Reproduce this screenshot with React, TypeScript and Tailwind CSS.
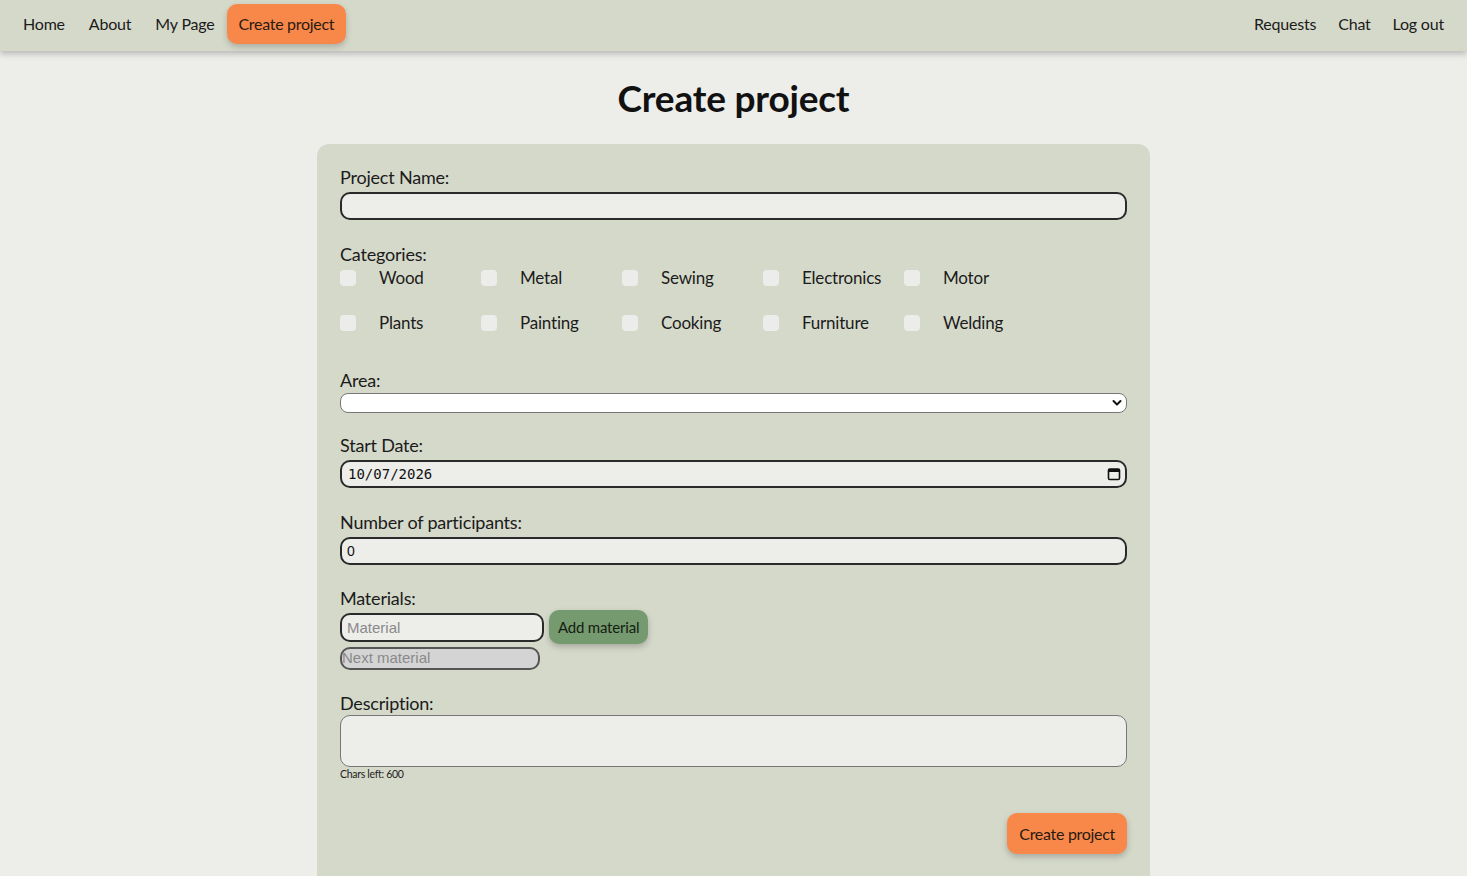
import React from "react";

const NAV_LEFT = ["Home", "About", "My Page"];
const NAV_RIGHT = ["Requests", "Chat", "Log out"];
const CATEGORIES = [
  "Wood",
  "Metal",
  "Sewing",
  "Electronics",
  "Motor",
  "Plants",
  "Painting",
  "Cooking",
  "Furniture",
  "Welding",
];

const font = { fontFamily: "Lato, 'Open Sans', sans-serif" };

function Label({ children, className = "" }: { children: React.ReactNode; className?: string }) {
  return (
    <div className={`text-[18px] leading-[24px] text-[#1b1b1b] tracking-[-0.2px] ${className}`}>{children}</div>
  );
}

function CalendarIcon() {
  return (
    <svg width="14" height="14" viewBox="0 0 14 14" className="shrink-0">
      <rect x="1.5" y="2" width="11" height="10.5" rx="1.3" fill="none" stroke="#111" strokeWidth="1.6" />
      <rect x="1.5" y="2" width="11" height="3" fill="#111" />
    </svg>
  );
}

function Chevron() {
  return (
    <svg width="10" height="8" viewBox="0 0 10 8" className="shrink-0">
      <path d="M1.5 2 L5 5.5 L8.5 2" fill="none" stroke="#111" strokeWidth="2" strokeLinecap="round" strokeLinejoin="round" />
    </svg>
  );
}

export default function App() {
  return (
    <div className="min-h-[876px] bg-[#ededea] text-[#1b1b1b]" style={font}>
      {/* top navigation */}
      <nav className="relative z-10 flex h-[51px] items-center justify-between bg-[#d5d9ca] pb-[3px] pl-[11px] pr-[12px] shadow-[0_3px_6px_rgba(0,0,0,0.22)]">
        <div className="flex items-center">
          {NAV_LEFT.map((item) => (
            <a key={item} className="px-[12px] text-[16px] tracking-[-0.2px] text-[#1b1b1b]">
              {item}
            </a>
          ))}
          <a className="flex h-[40px] items-center rounded-[10px] bg-[#f8884a] px-[12px] text-[16px] tracking-[-0.3px] text-[#2a1a10] shadow-[0_3px_6px_rgba(0,0,0,0.2)]">
            Create project
          </a>
        </div>
        <div className="flex items-center">
          {NAV_RIGHT.map((item) => (
            <a key={item} className="px-[11px] text-[16px] tracking-[-0.2px] text-[#1b1b1b]">
              {item}
            </a>
          ))}
        </div>
      </nav>

      <h1 className="mt-[25px] text-center text-[37px] font-bold leading-[44px] tracking-[-0.2px] text-[#111]">
        Create project
      </h1>

      <form className="mx-auto mt-[24px] w-[833px] rounded-t-[12px] bg-[#d5d9ca] px-[23px] pt-[21px] pb-[22px]">
        <Label>Project Name:</Label>
        <input
          className="mt-[3px] block h-[28px] w-full rounded-[10px] border-2 border-[#2a2a2a] bg-[#ededea] px-2 outline-none"
          type="text"
        />

        <Label className="mt-[22px]">Categories:</Label>
        <div className="grid grid-cols-[repeat(5,141px)] gap-y-[21px]">
          {CATEGORIES.map((c) => (
            <label key={c} className="flex h-[24px] items-center">
              <span className="block h-[16px] w-[16px] rounded-[4px] bg-[#ececea]" />
              <span className="ml-[23px] text-[17px] tracking-[-0.2px] text-[#1b1b1b]">{c}</span>
            </label>
          ))}
        </div>

        <Label className="mt-[33px]">Area:</Label>
        <div className="mt-[1px] flex h-[20px] w-full items-center justify-end rounded-[8px] border border-[#777] bg-white pr-[4px]">
          <Chevron />
        </div>

        <Label className="mt-[20px]">Start Date:</Label>
        <div className="mt-[3px] flex h-[28px] w-full items-center justify-between rounded-[10px] border-2 border-[#2a2a2a] bg-[#ededea] pl-[6px] pr-[4px]">
          <span className="text-[14px] text-[#111]" style={{ fontFamily: "'DejaVu Sans Mono', monospace" }}>
            10/07/2026
          </span>
          <CalendarIcon />
        </div>

        <Label className="mt-[22px]">Number of participants:</Label>
        <div className="mt-[3px] flex h-[28px] w-full items-center rounded-[10px] border-2 border-[#2a2a2a] bg-[#ededea] pl-[5px]">
          <span className="text-[14px] text-[#111]" style={{ fontFamily: "'Liberation Sans', Arial, sans-serif" }}>
            0
          </span>
        </div>

        <Label className="mt-[21px]">Materials:</Label>
        <div className="flex items-center">
          <input
            className="block h-[29px] w-[204px] rounded-[10px] border-2 border-[#2a2a2a] bg-[#ededea] px-[5px] text-[15px] text-[#111] outline-none placeholder:text-[#8a8a8a]"
            style={{ fontFamily: "'Liberation Sans', Arial, sans-serif" }}
            placeholder="Material"
            type="text"
          />
          <button
            type="button"
            className="ml-[5px] h-[34px] rounded-[10px] bg-[#769a70] px-[9px] text-[15px] tracking-[-0.2px] text-[#14200f] shadow-[0_3px_6px_rgba(0,0,0,0.22)]"
          >
            Add material
          </button>
        </div>
        <div
          className="mt-[3px] flex h-[23px] w-[200px] items-center rounded-[10px] border-2 border-[#555] bg-[#d4d4d4] text-[15px] text-[#8a8a8a]"
          style={{ fontFamily: "'Liberation Sans', Arial, sans-serif" }}
        >
          Next material
        </div>

        <Label className="mt-[21px]">Description:</Label>
        <textarea className="block h-[52px] w-full resize-none rounded-[10px] border border-[#777] bg-[#ededea] outline-none" />
        <div className="mt-[1px] text-[10.5px] leading-[12px] tracking-[-0.3px] text-[#222]">Chars left: 600</div>

        <div className="mt-[33px] flex justify-end">
          <button
            type="button"
            className="h-[41px] rounded-[10px] bg-[#f8884a] px-[12px] text-[16px] tracking-[-0.3px] text-[#2a1a10] shadow-[0_3px_6px_rgba(0,0,0,0.22)]"
          >
            Create project
          </button>
        </div>
      </form>
    </div>
  );
}
